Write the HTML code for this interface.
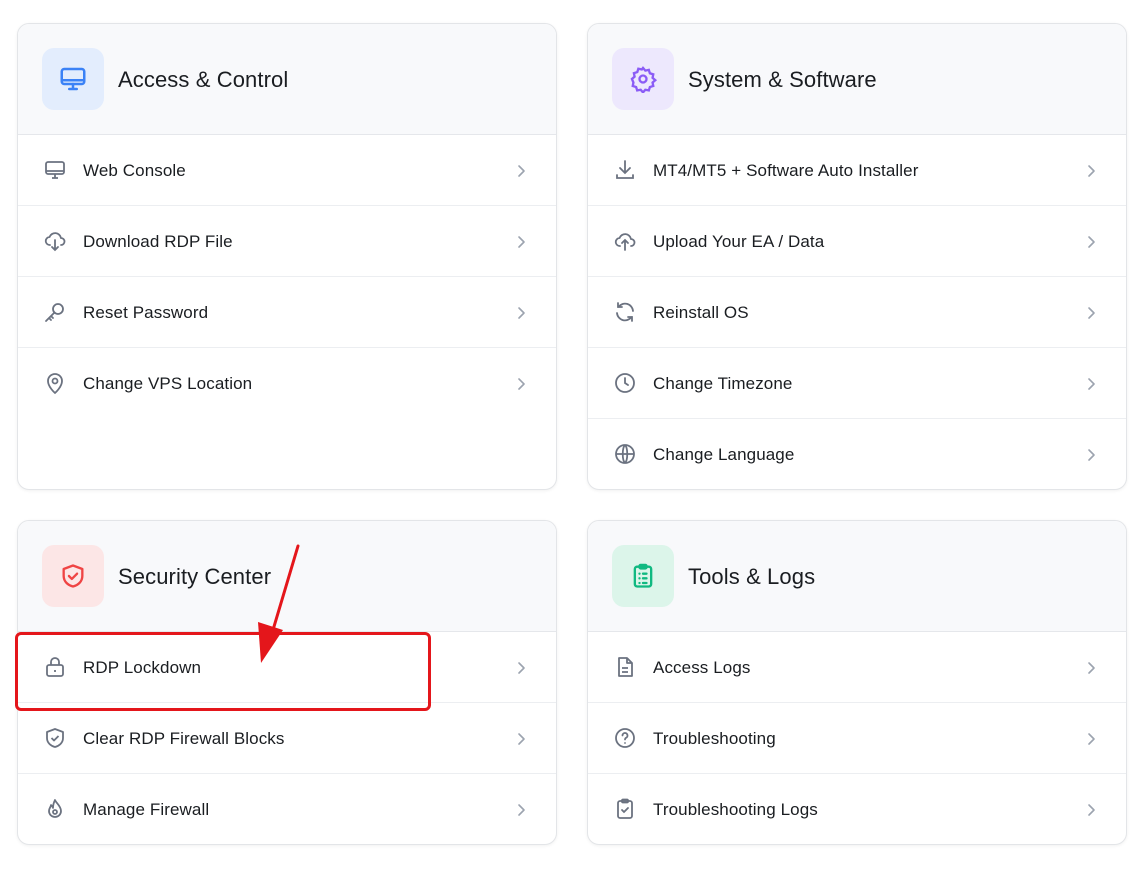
<!DOCTYPE html><html><head><style>
body{margin:0;background:#fff;font-family:"Liberation Sans",sans-serif;width:1143px;height:869px;position:relative;overflow:hidden}
.card{position:absolute;border:1px solid #e3e5e8;border-radius:12px;background:#fff;overflow:hidden;box-shadow:0 1px 3px rgba(0,0,0,.06)}
.hd{height:110px;background:#f8f9fb;border-bottom:1px solid #e5e7eb;position:relative}
.ib{position:absolute;left:24px;top:24px;width:62px;height:62px;border-radius:12px;display:flex;align-items:center;justify-content:center}
.tt{position:absolute;left:100px;top:43px;font-size:22px;color:#1a1d21;letter-spacing:.1px}
.row{height:70px;border-bottom:1px solid #eceef1;position:relative}
.row:last-child{border-bottom:none}
.row svg.i{position:absolute;left:25px;top:23px}
.row span{position:absolute;left:65px;top:26px;font-size:17px;color:#1a1d21;letter-spacing:.1px}
.row svg.c{position:absolute;right:27px;top:28px}
</style></head><body>
<svg width="0" height="0" style="position:absolute"><defs>
<symbol id="ch" viewBox="0 0 16 16"><path d="M6 3l5 5-5 5" fill="none" stroke="#9ca3af" stroke-width="1.6" stroke-linecap="round" stroke-linejoin="round"/></symbol>
</defs></svg>

<div class="card" style="left:17px;top:23px;width:538px;height:465px">
<div class="hd"><div class="ib" style="background:#e3edfd"><svg width="30" height="30" viewBox="0 0 24 24" fill="none" stroke="#3b82f6" stroke-width="2" stroke-linecap="round"><rect x="3" y="4" width="18" height="12" rx="2"/><path d="M3 13h18M9 20h6M12 16v4"/></svg></div><div class="tt">Access &amp; Control</div></div>
<div class="row"><svg class="i" width="24" height="24" viewBox="0 0 24 24" fill="none" stroke="#6b7280" stroke-width="1.8"><rect x="3" y="4" width="18" height="12" rx="2"/><path d="M3 13h18M9 20h6M12 16v4"/></svg><span>Web Console</span><svg class="c" width="16" height="16"><use href="#ch"/></svg></div>
<div class="row"><svg class="i" width="24" height="24" viewBox="0 0 24 24" fill="none" stroke="#6b7280" stroke-width="1.8" stroke-linecap="round"><path d="M7 16a4 4 0 0 1-.5-8A6 6 0 0 1 18 9a3.5 3.5 0 0 1 0 7"/><path d="M12 11v10M9 18l3 3 3-3"/></svg><span>Download RDP File</span><svg class="c" width="16" height="16"><use href="#ch"/></svg></div>
<div class="row"><svg class="i" width="24" height="24" viewBox="0 0 24 24" fill="none" stroke="#6b7280" stroke-width="1.8" stroke-linecap="round"><circle cx="15" cy="9" r="5"/><path d="M11.5 12.5L3 21M6 18l2 2M8 16l2 2"/></svg><span>Reset Password</span><svg class="c" width="16" height="16"><use href="#ch"/></svg></div>
<div class="row"><svg class="i" width="24" height="24" viewBox="0 0 24 24" fill="none" stroke="#6b7280" stroke-width="1.8"><path d="M12 22s7-6 7-12a7 7 0 0 0-14 0c0 6 7 12 7 12z"/><circle cx="12" cy="10" r="2.5"/></svg><span>Change VPS Location</span><svg class="c" width="16" height="16"><use href="#ch"/></svg></div>
</div>

<div class="card" style="left:587px;top:23px;width:538px;height:465px">
<div class="hd"><div class="ib" style="background:#ede8fd"><svg width="28" height="28" viewBox="0 0 24 24" fill="none" stroke="#8b5cf6" stroke-width="2"><circle cx="12" cy="12" r="3"/><path d="M12 2.5l2 2.3 3-.6.9 2.9 2.9.9-.6 3 2.3 2-2.3 2 .6 3-2.9.9-.9 2.9-3-.6-2 2.3-2-2.3-3 .6-.9-2.9-2.9-.9.6-3L2.5 12l2.3-2-.6-3 2.9-.9.9-2.9 3 .6z"/></svg></div><div class="tt">System &amp; Software</div></div>
<div class="row"><svg class="i" width="24" height="24" viewBox="0 0 24 24" fill="none" stroke="#6b7280" stroke-width="1.8" stroke-linecap="round"><path d="M12 3v12M7 10l5 5 5-5M4 17v3h16v-3"/></svg><span>MT4/MT5 + Software Auto Installer</span><svg class="c" width="16" height="16"><use href="#ch"/></svg></div>
<div class="row"><svg class="i" width="24" height="24" viewBox="0 0 24 24" fill="none" stroke="#6b7280" stroke-width="1.8" stroke-linecap="round"><path d="M7 17a4 4 0 0 1-.5-8A6 6 0 0 1 18 10a3.5 3.5 0 0 1 0 7"/><path d="M12 21V11M9 14l3-3 3 3"/></svg><span>Upload Your EA / Data</span><svg class="c" width="16" height="16"><use href="#ch"/></svg></div>
<div class="row"><svg class="i" width="24" height="24" viewBox="0 0 24 24" fill="none" stroke="#6b7280" stroke-width="1.8" stroke-linecap="round"><path d="M20 11A8 8 0 0 0 5.5 7M4 13a8 8 0 0 0 14.5 4M5 3v4h4M19 21v-4h-4"/></svg><span>Reinstall OS</span><svg class="c" width="16" height="16"><use href="#ch"/></svg></div>
<div class="row"><svg class="i" width="24" height="24" viewBox="0 0 24 24" fill="none" stroke="#6b7280" stroke-width="1.8" stroke-linecap="round"><circle cx="12" cy="12" r="9"/><path d="M12 7v5l3 2"/></svg><span>Change Timezone</span><svg class="c" width="16" height="16"><use href="#ch"/></svg></div>
<div class="row"><svg class="i" width="24" height="24" viewBox="0 0 24 24" fill="none" stroke="#6b7280" stroke-width="1.8"><circle cx="12" cy="12" r="9"/><path d="M3 12h18M12 3c3 3 3 15 0 18M12 3c-3 3-3 15 0 18"/></svg><span>Change Language</span><svg class="c" width="16" height="16"><use href="#ch"/></svg></div>
</div>

<div class="card" style="left:17px;top:520px;width:538px;height:323px">
<div class="hd"><div class="ib" style="background:#fce6e6"><svg width="28" height="28" viewBox="0 0 24 24" fill="none" stroke="#ef4444" stroke-width="2" stroke-linecap="round" stroke-linejoin="round"><path d="M12 3l8 3v6c0 5-4 8-8 9-4-1-8-4-8-9V6z"/><path d="M8.5 12l2.5 2.5 4.5-4.5"/></svg></div><div class="tt">Security Center</div></div>
<div class="row"><svg class="i" width="24" height="24" viewBox="0 0 24 24" fill="none" stroke="#6b7280" stroke-width="1.8"><rect x="4" y="10" width="16" height="11" rx="2"/><path d="M8 10V7a4 4 0 0 1 8 0v3M12 15v2"/></svg><span>RDP Lockdown</span><svg class="c" width="16" height="16"><use href="#ch"/></svg></div>
<div class="row"><svg class="i" width="24" height="24" viewBox="0 0 24 24" fill="none" stroke="#6b7280" stroke-width="1.8" stroke-linejoin="round"><path d="M12 3l8 3v6c0 5-4 8-8 9-4-1-8-4-8-9V6z"/><path d="M8.5 12l2.5 2.5 4.5-4.5"/></svg><span>Clear RDP Firewall Blocks</span><svg class="c" width="16" height="16"><use href="#ch"/></svg></div>
<div class="row"><svg class="i" width="24" height="24" viewBox="0 0 24 24" fill="none" stroke="#6b7280" stroke-width="1.8" stroke-linejoin="round"><path d="M12 3c1 3 6 6 6 11a6 6 0 0 1-12 0c0-3 2-4 2-6 1 1 2 2 2 3 0-3 1-6 2-8z"/><circle cx="12" cy="15" r="2"/></svg><span>Manage Firewall</span><svg class="c" width="16" height="16"><use href="#ch"/></svg></div>
</div>

<div class="card" style="left:587px;top:520px;width:538px;height:323px">
<div class="hd"><div class="ib" style="background:#dcf5ea"><svg width="28" height="28" viewBox="0 0 24 24" fill="none" stroke="#10b981" stroke-width="2" stroke-linecap="round"><rect x="5" y="4" width="14" height="17" rx="2"/><rect x="9" y="2.5" width="6" height="3" rx="1"/><path d="M9 10h.01M12 10h3M9 14h.01M12 14h3M9 18h.01M12 18h3"/></svg></div><div class="tt">Tools &amp; Logs</div></div>
<div class="row"><svg class="i" width="24" height="24" viewBox="0 0 24 24" fill="none" stroke="#6b7280" stroke-width="1.8" stroke-linejoin="round"><path d="M6 3h8l5 5v13H6z"/><path d="M14 3v5h5M9 13h6M9 17h6"/></svg><span>Access Logs</span><svg class="c" width="16" height="16"><use href="#ch"/></svg></div>
<div class="row"><svg class="i" width="24" height="24" viewBox="0 0 24 24" fill="none" stroke="#6b7280" stroke-width="1.8" stroke-linecap="round"><circle cx="12" cy="12" r="9"/><path d="M9.5 9.5a2.5 2.5 0 1 1 3.5 2.3c-.7.4-1 1-1 1.7M12 17h.01"/></svg><span>Troubleshooting</span><svg class="c" width="16" height="16"><use href="#ch"/></svg></div>
<div class="row"><svg class="i" width="24" height="24" viewBox="0 0 24 24" fill="none" stroke="#6b7280" stroke-width="1.8" stroke-linecap="round"><rect x="5" y="4" width="14" height="17" rx="2"/><rect x="9" y="2.5" width="6" height="3" rx="1"/><path d="M9 13l2 2 4-4"/></svg><span>Troubleshooting Logs</span><svg class="c" width="16" height="16"><use href="#ch"/></svg></div>
</div>

<div style="position:absolute;left:15px;top:632px;width:410px;height:73px;border:3px solid #e4161b;border-radius:6px"></div>
<svg style="position:absolute;left:0;top:0" width="1143" height="869"><path d="M298 546 L270 640" stroke="#e4161b" stroke-width="3" stroke-linecap="round"/><path d="M258 622 L261 663 L283 630 Z" fill="#e4161b"/></svg>
</body></html>
